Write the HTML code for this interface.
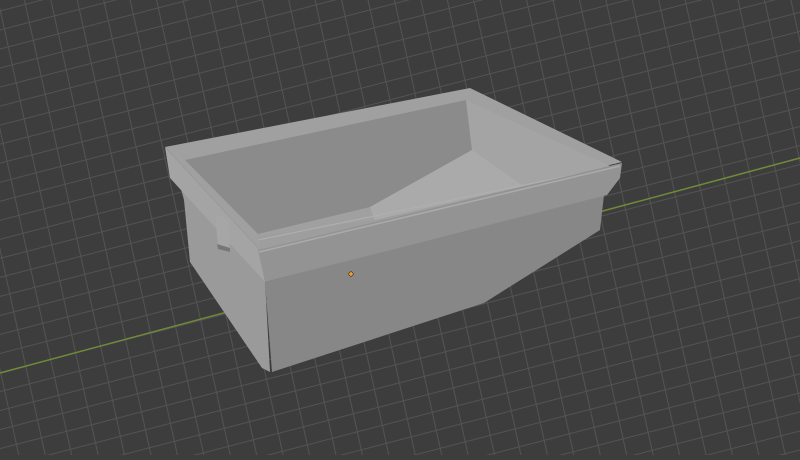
<!DOCTYPE html>
<html><head><style>html,body{margin:0;padding:0;background:#3d3d3d;overflow:hidden}</style></head>
<body>
<svg width="800" height="455" viewBox="0 0 800 455" xmlns="http://www.w3.org/2000/svg">
<defs>
<pattern id="g" width="25" height="18" patternUnits="userSpaceOnUse" patternTransform="matrix(1,-0.26,0.22,1,0,372)">
<rect width="25" height="18" fill="#3d3d3d"/>
<path d="M0 0.5H25M0.5 0V18" stroke="#535353" stroke-width="1" fill="none"/>
</pattern>
</defs>
<rect width="800" height="455" fill="url(#g)"/>
<line x1="0" y1="373" x2="800" y2="158" stroke="#6f8a3a" stroke-width="1.5"/>
<!-- left side body -->
<polygon points="178,178 265,280 270,372 262,368 190,262 184,200" fill="#9a9a9a"/>
<!-- body front -->
<polygon points="265,282 604,195 600,230 484,303 272,372" fill="#878787"/>
<!-- rim top outer -->
<polygon points="165,147 470,88 622,162 260,250" fill="#a0a0a0"/>
<!-- inner back wall -->
<polygon points="185,160 466,100 472,150 370,207 258,234" fill="#8b8b8b"/>
<!-- inner right wall -->
<polygon points="466,100 610,166 525,187 472,150" fill="#a4a4a4"/>
<!-- floor -->
<polygon points="472,150 525,187 610,166 375,222 370,207" fill="#aaaaaa"/>
<!-- front inner lip -->
<polygon points="258,236 375,220 610,166 622,163 260,250" fill="#9e9e9e"/>
<line x1="258" y1="240" x2="612" y2="167" stroke="#b0b0b0" stroke-width="1"/>
<!-- rim left face -->
<polygon points="165,147 260,250 265,282 170,178" fill="#a4a4a4"/>
<!-- rim front face -->
<polygon points="258,250 622,163 620,178 607,195 265,282" fill="#939393"/>
<line x1="259" y1="252" x2="620" y2="166" stroke="#aaa" stroke-width="1.5"/>
<!-- handle -->
<polygon points="215,214 228,220 230,250 218,246" fill="#a6a6a6"/>
<polygon points="217,244 230,248 230,252 218,249" fill="#777"/>
<circle cx="351" cy="274" r="2.2" fill="#f0a030" stroke="#000" stroke-width="0.5"/>
</svg>
</body></html>
